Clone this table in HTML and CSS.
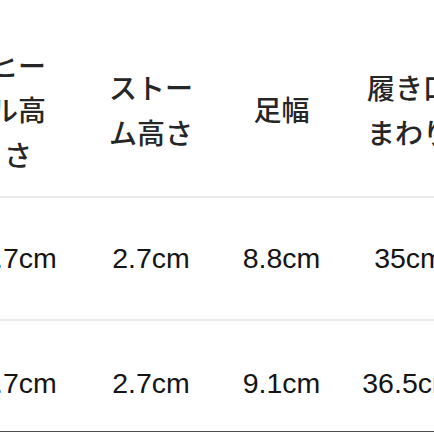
FILE: index.html
```html
<!DOCTYPE html>
<html lang="ja">
<head>
<meta charset="utf-8">
<link rel="stylesheet" href="styles.css">
</head>
<body>
<div class="wrap">
<table class="size-table">
<colgroup>
<col class="c1"><col class="c2"><col class="c3"><col class="c4">
</colgroup>
<thead>
<tr class="head-row">
<th class="p1">ヒール高さ</th>
<th class="p2">ストーム高さ</th>
<th class="p3">足幅</th>
<th class="p4">履き口まわり</th>
</tr>
</thead>
<tbody>
<tr class="row-a">
<td>2.7cm</td>
<td>2.7cm</td>
<td>8.8cm</td>
<td>35cm</td>
</tr>
<tr class="row-b">
<td>2.7cm</td>
<td>2.7cm</td>
<td>9.1cm</td>
<td>36.5cm</td>
</tr>
</tbody>
</table>
</div>
</body>
</html>
```
FILE: styles.css
```css
html, body {
  margin: 0;
  padding: 0;
  background: #ffffff;
  overflow: hidden;
  width: 434px;
  height: 434px;
}
.wrap {
  padding-top: 23px;
  margin-left: -49px;
  width: 521px;
}
.size-table {
  border-collapse: collapse;
  table-layout: fixed;
  width: 521px;
}
.c1 { width: 134px; }
.c2 { width: 132px; }
.c3 { width: 129px; }
.c4 { width: 126px; }
.size-table th {
  font-family: "Noto Sans CJK JP", sans-serif;
  font-weight: 500;
  font-size: 28px;
  line-height: 44.5px;
  color: #262626;
  text-align: center;
  vertical-align: middle;
  height: 174px;
  padding: 0;
  box-sizing: border-box;
  border-bottom: 2px solid #ebebeb;
}
.size-table th.p1 { padding: 0 30px; }
.size-table th.p2 { padding: 0 16px; }
.size-table th.p3 { padding: 0 10px; }
.size-table th.p4 { padding: 0 15px; }
.size-table td {
  font-family: "Liberation Sans", Arial, sans-serif;
  font-size: 28.5px;
  color: #151515;
  text-align: center;
  vertical-align: middle;
  padding: 0;
  white-space: nowrap;
}
.row-a td {
  height: 121px;
  border-bottom: 2px solid #ebebeb;
}
.row-b td {
  height: 111px;
  padding-top: 15px;
  box-sizing: border-box;
  border-bottom: 1px solid #4d4d4d;
}
```
